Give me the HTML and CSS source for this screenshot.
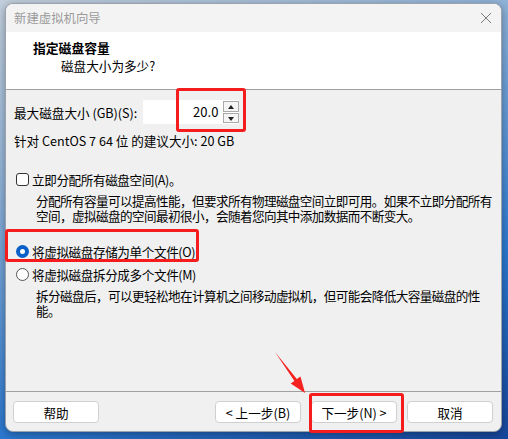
FILE: index.html
```html
<!DOCTYPE html>
<html>
    <head>
        <meta charset="utf-8">
        <title>新建虚拟机向导</title>
        <link rel="stylesheet" href="styles.css">
    </head>
    <body>
    <div class="desk">
        <div class="win">
            <div class="titlebar">
                <span>新建虚拟机向导</span>
                <svg class="close" width="12" height="12" viewBox="0 0 12 12"><path d="M1 1L11 11M11 1L1 11" stroke="#7a7a7a" stroke-width="1"/></svg>
            </div>
            <header class="head">
                <h1>指定磁盘容量</h1>
                <p>磁盘大小为多少?</p>
            </header>
            <section class="main">
                <div class="size">
                    <span>最大磁盘大小 (GB)(S):</span>
                    <div class="spin">
                        <div class="val">20.0</div>
                        <div class="arrows">
                            <div class="up"></div>
                            <div class="down"></div>
                        </div>
                    </div>
                </div>
                <p class="hint">针对 CentOS 7 64 位 的建议大小: 20 GB</p>

                <div class="opt first">
                    <span class="box"></span>
                    <span>立即分配所有磁盘空间(A)。</span>
                </div>
                <p class="desc">分配所有容量可以提高性能，但要求所有物理磁盘空间立即可用。如果不立即分配所有<br>空间，虚拟磁盘的空间最初很小，会随着您向其中添加数据而不断变大。</p>

                <div class="opt second">
                    <span class="radio on"></span>
                    <span>将虚拟磁盘存储为单个文件(O)</span>
                </div>
                <div class="opt third">
                    <span class="radio"></span>
                    <span>将虚拟磁盘拆分成多个文件(M)</span>
                </div>
                <p class="desc last">拆分磁盘后，可以更轻松地在计算机之间移动虚拟机，但可能会降低大容量磁盘的性<br>能。</p>
            </section>
            <footer class="foot">
                <button class="btn">帮助</button>
                <div class="nav">
                    <button class="btn">&lt; 上一步(B)</button>
                    <button class="btn">下一步(N) &gt;</button>
                    <button class="btn">取消</button>
                </div>
            </footer>
        </div>

        <!-- annotations -->
        <div class="mark m1"></div>
        <div class="mark m2"></div>
        <div class="mark m3"></div>
        <svg class="arrow" width="40" height="48" viewBox="0 0 40 48">
            <polygon points="2,2 23.8,29.1 27.5,26.5 32,43 17.7,33.5 21.4,30.9" fill="#f52222"/>
        </svg>
    </div>
    </body>
</html>
```

FILE: styles.css
```css
*{
    box-sizing: border-box;
}

body{
    margin: 0;
    font-family: "Noto Sans CJK SC", "Noto Sans", sans-serif;
    font-size: 12.6px;
    color: #000;
}

.desk{
    position: relative;
    width: 508px;
    height: 439px;
    padding: 3px 6px 7px 5px;
    background: linear-gradient(160deg, #c3cfdc 0%, #8fb2d8 30%, #2b78cf 70%, #16469a 100%);
    overflow: hidden;
}

.win{
    height: 429px;
    background-color: #f0f0f0;
    border: 1px solid #9aa3ad;
    border-radius: 8px;
    overflow: hidden;
    display: flex;
    flex-direction: column;
    box-shadow: 0 2px 8px rgba(0, 0, 0, 0.35);
}

.titlebar{
    height: 28px;
    background-color: #f3f3f3;
    display: flex;
    align-items: center;
    justify-content: space-between;
    padding: 0 9px 0 8px;
    color: #9a9a9a;
    font-size: 12.4px;
}

.head{
    height: 58px;
    background-color: #fff;
    border-bottom: 1px solid #a0a0a0;
    padding: 7px 0 0 27px;
}

.head h1{
    margin: 0;
    font-size: 12.8px;
    font-weight: bold;
    line-height: 18px;
}

.head p{
    margin: 0 0 0 28px;
    line-height: 18px;
}

.main{
    flex: 1;
    padding: 10px 8px 0 8px;
    line-height: 15px;
}

.size{
    display: flex;
    align-items: center;
    height: 24px;
    gap: 6px;
}

.spin{
    display: flex;
    height: 24px;
    width: 96px;
    background-color: #fff;
}

.val{
    flex: 1;
    text-align: right;
    padding-right: 5px;
    line-height: 24px;
    font-size: 13px;
}

.arrows{
    width: 16px;
    padding: 1px 0;
    display: flex;
    flex-direction: column;
    gap: 1px;
}

.up, .down{
    flex: 1;
    border: 1px solid #aaa;
    background-color: #f5f5f5;
    position: relative;
}

.up::after, .down::after{
    content: "";
    position: absolute;
    left: 4px;
    top: 3px;
    border-left: 3px solid transparent;
    border-right: 3px solid transparent;
}

.up::after{
    border-bottom: 4px solid #222;
}

.down::after{
    border-top: 4px solid #222;
}

.hint{
    margin: 9px 0 0 0;
    line-height: 16px;
}

.opt{
    display: flex;
    align-items: center;
    gap: 3px;
    height: 16px;
    margin-left: 2px;
    letter-spacing: -0.4px;
}

.opt.first{
    margin-top: 22px;
}

.opt.second{
    margin-top: 20px;
}

.opt.third{
    margin-top: 7px;
}

.box{
    width: 13px;
    height: 13px;
    border: 1px solid #333;
    border-radius: 3px;
    background-color: #fff;
}

.radio{
    width: 13px;
    height: 13px;
    border: 1px solid #555;
    border-radius: 50%;
    background-color: #fff;
}

.radio.on{
    border: 4px solid #0a5fc8;
    background-color: #fff;
}

.desc{
    margin: 6px 0 0 22px;
    line-height: 15px;
    white-space: nowrap;
    letter-spacing: -0.6px;
}

.desc.last{
    margin-top: 6px;
}

.foot{
    height: 40px;
    border-top: 1px solid #a0a0a0;
    display: flex;
    justify-content: space-between;
    padding: 9px 8px 0 7px;
}

.nav{
    display: flex;
    gap: 10px;
}

.btn{
    width: 86px;
    height: 22px;
    background-color: #fff;
    border: 1px solid #cfcfcf;
    border-radius: 4px;
    font-family: "Noto Sans CJK SC", "Noto Sans", sans-serif;
    font-size: 12.6px;
    padding: 0;
    color: #000;
}

.mark{
    position: absolute;
    border: 3px solid #f41c1c;
    border-radius: 3px;
}

.m1{
    left: 176px;
    top: 88px;
    width: 70px;
    height: 44px;
}

.m2{
    left: 5px;
    top: 229px;
    width: 194px;
    height: 33px;
}

.m3{
    left: 309px;
    top: 393px;
    width: 95px;
    height: 40px;
}

.arrow{
    position: absolute;
    left: 273px;
    top: 350px;
}
```
